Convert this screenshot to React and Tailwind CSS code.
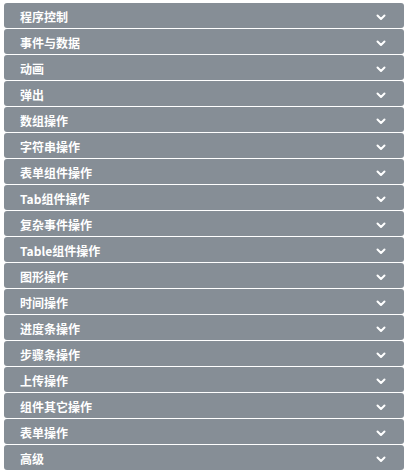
import React from "react";

const items = [
  "程序控制",
  "事件与数据",
  "动画",
  "弹出",
  "数组操作",
  "字符串操作",
  "表单组件操作",
  "Tab组件操作",
  "复杂事件操作",
  "Table组件操作",
  "图形操作",
  "时间操作",
  "进度条操作",
  "步骤条操作",
  "上传操作",
  "组件其它操作",
  "表单操作",
  "高级",
];

function Chevron() {
  return (
    <svg width="10" height="7" viewBox="0 0 10 7" className="shrink-0 mt-[3px]">
      <path d="M1.5 1.5 L5 5 L8.5 1.5" fill="none" stroke="white" strokeWidth="2" strokeLinecap="round" strokeLinejoin="round" />
    </svg>
  );
}

export default function App() {
  return (
    <div className="w-[408px] h-[471px] bg-white pt-[3px] px-[4px] flex flex-col gap-px" style={{ fontFamily: '"Noto Sans CJK SC", "Liberation Sans", sans-serif' }}>
      {items.map((t) => (
        <div key={t} className="h-[25px] shrink-0 rounded-[3px] bg-[#868e96] flex items-center justify-between pl-[16px] pr-[18px]">
          <span className="text-white text-[12px] font-bold leading-none pt-[2px]">{t}</span>
          <Chevron />
        </div>
      ))}
    </div>
  );
}
